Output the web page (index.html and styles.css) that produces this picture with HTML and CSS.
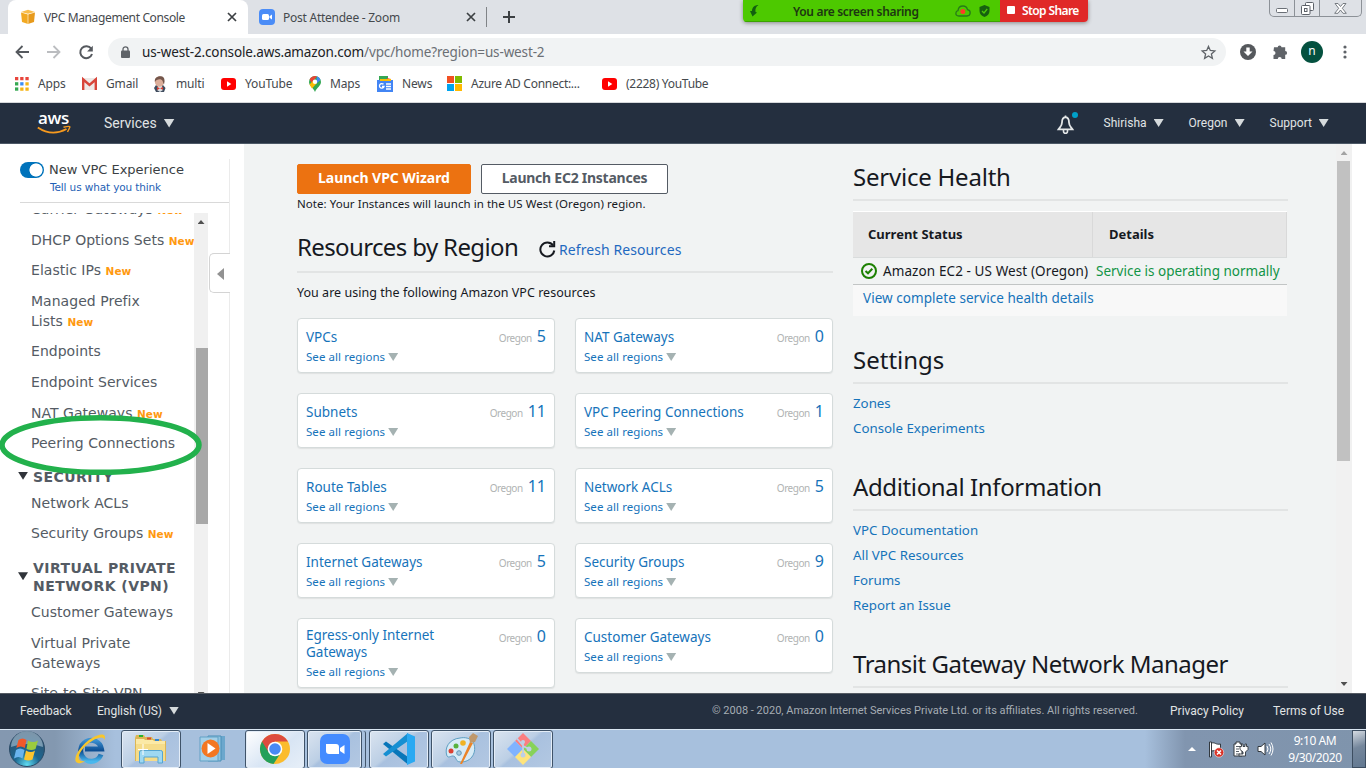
FILE: index.html
```html
<!DOCTYPE html>
<html lang="en">
<head>
<meta charset="utf-8">
<title>VPC Management Console</title>
<link rel="stylesheet" href="styles.css">
</head>
<body>
<header class="tabs">
  <div class="tab active">
    <svg width="16" height="16" viewBox="0 0 16 16"><path d="M1 3.500 8 5.500V15L2 13z" fill="#f2a922"/><path d="M15 3.500 8 5.500V15l6-2z" fill="#e79a1c"/><path d="M1 3 8 .8 15 3 8 4.800z" fill="#f9bd4a"/><path d="M8 5v10" stroke="#fff3d5" stroke-width=".7"/></svg>
    <span class="tab-title t1">VPC Management Console</span>
    <svg class="x" width="10" height="10" viewBox="0 0 10 10"><path d="M1 1l8 8M9 1 1 9" stroke="#3c4043" stroke-width="1.700"/></svg>
  </div>
  <div class="tab idle">
    <svg width="16" height="16" viewBox="0 0 16 16"><rect width="16" height="16" rx="4" fill="#4a8cf7"/><rect x="3" y="5" width="7" height="6" rx="1.500" fill="#fff"/><path d="M10.500 7.300 13 5.500v5l-2.500-1.800z" fill="#fff"/></svg>
    <span class="tab-title t2">Post Attendee - Zoom</span>
    <svg class="x" width="10" height="10" viewBox="0 0 10 10"><path d="M1 1l8 8M9 1 1 9" stroke="#3c4043" stroke-width="1.700"/></svg>
  </div>
  <svg class="plus" width="12" height="12" viewBox="0 0 12 12"><path d="M6 0v12M0 6h12" stroke="#3c4043" stroke-width="2"/></svg>
  <div class="share">
    <div class="share-green">
      <svg width="9" height="12" viewBox="0 0 9 12"><path d="M8.500 0C5 0 2 2 2 6L0 6l2.500 5.500L7 7.500 5.500 7C5 4 6 1.500 8.500 0z" fill="#12600f"/></svg>
      <span class="share-text">You are screen sharing</span>
      <svg class="cloud" width="16" height="12" viewBox="0 0 16 12"><path d="M4 11C1.500 11 .7 9.500.9 8 1 6.700 2 5.800 3 5.600 3.300 2.500 5.500 1 8 1c2.700 0 4 1.600 4.500 3.600 2 .4 2.800 1.700 2.700 3.400C15 10 14 11 12 11z" fill="none" stroke="#287b18" stroke-width="1.300"/><circle cx="7.800" cy="6.500" r="2.500" fill="#ff3b28"/></svg>
      <svg width="11" height="12" viewBox="0 0 11 12"><path d="M5.500 0 10.500 2v4c0 3-2 5-5 6-3-1-5-3-5-6V2z" fill="#17600f"/><path d="M3 6l2 2 3.200-4" fill="none" stroke="#4dc90a" stroke-width="1.300"/></svg>
    </div>
    <div class="share-red"><i></i><span>Stop Share</span></div>
  </div>
  <div class="winbtns">
    <span><svg width="12" height="6" viewBox="0 0 12 6"><rect x=".5" y=".5" width="11" height="4" rx="1" fill="#fff" stroke="#6a6f76"/></svg></span>
    <span><svg width="13" height="13" viewBox="0 0 13 13"><rect x="4.500" y=".5" width="8" height="8" rx="1" fill="#fff" stroke="#5c6168"/><rect x=".5" y="3.500" width="8.500" height="9" rx="1" fill="#fff" stroke="#5c6168"/><rect x="3.500" y="6.500" width="2.500" height="3" fill="#fff" stroke="#5c6168"/></svg></span>
    <span><svg width="13" height="11" viewBox="0 0 13 11"><path d="M1 .5h3l2.500 3L9 .5h3L8.300 5.300l4 5H9L6.500 7 4 10.300H.7l4-5z" fill="#fff" stroke="#6a6f76" stroke-width=".9"/></svg></span>
  </div>
</header>

<div class="toolbar">
  <svg width="14" height="14" viewBox="0 0 14 14"><path d="M14 7H1.500M7.500 1l-6 6 6 6" fill="none" stroke="#55595e" stroke-width="1.800"/></svg>
  <svg width="14" height="14" viewBox="0 0 14 14"><path d="M0 7h12.500M6.500 1l6 6-6 6" fill="none" stroke="#bbbdc0" stroke-width="1.800"/></svg>
  <svg width="15" height="15" viewBox="0 0 15 15"><path d="M12.200 3.700A6 6 0 1 0 13 9" fill="none" stroke="#55595e" stroke-width="2"/><path d="M13.800 .8v5.700H8.100z" fill="#55595e"/></svg>
  <div class="omnibox">
    <svg width="9" height="12" viewBox="0 0 9 12"><rect y="4.500" width="9" height="7.500" rx="1" fill="#5f6368"/><path d="M2 5V3.300a2.500 2.500 0 0 1 5 0V5" fill="none" stroke="#5f6368" stroke-width="1.300"/></svg>
    <span class="url">us-west-2.console.aws.amazon.com<em>/vpc/home?region=us-west-2</em></span>
    <svg class="star" width="15" height="15" viewBox="0 0 15 15"><path d="M7.500 1.400 9.300 5.500l4.500.4-3.400 3 1 4.400-3.900-2.400-3.900 2.400 1-4.400-3.400-3 4.500-.4z" fill="none" stroke="#5f6368" stroke-width="1.300"/></svg>
  </div>
  <svg class="dl" width="16" height="16" viewBox="0 0 16 16"><circle cx="8" cy="8" r="8" fill="#55585c"/><path d="M6.300 3.500h3.400v4H12.500L8 12 3.500 7.500h2.800z" fill="#fff"/></svg>
  <svg class="ext" width="16" height="16" viewBox="0 0 16 16"><path d="M2 3.300h3.700a1.900 1.900 0 1 1 3.800 0h3.700V7a1.900 1.900 0 1 1 0 3.800V15H9.700a2 2 0 0 0-4 0H1.500v-4a2 2 0 0 0 0-4z" fill="#5f6368"/></svg>
  <span class="avatar">n</span>
  <svg class="dots" width="4" height="14" viewBox="0 0 4 14"><g fill="#5f6368"><circle cx="2" cy="2" r="1.600"/><circle cx="2" cy="7" r="1.600"/><circle cx="2" cy="12" r="1.600"/></g></svg>
</div>

<nav class="bookmarks">
  <a class="b-apps"><svg width="14" height="14" viewBox="0 0 14 14"><g fill="#e8453c"><path d="M0 0h3.300v3.300H0zM5.200 0h3.300v3.300H5.200zM10.400 0h3.300v3.300h-3.300z"/></g><path d="M0 5.200h3.300v3.300H0z" fill="#36a852"/><path d="M5.200 5.200h3.300v3.300H5.200z" fill="#3b8df5"/><path d="M10.400 5.200h3.300v3.300h-3.300zM5.200 10.400h3.300v3.300H5.200zM10.400 10.400h3.300v3.300h-3.300z" fill="#f6b414"/><path d="M0 10.400h3.300v3.300H0z" fill="#36a852"/></svg><span>Apps</span></a>
  <a class="b-gmail"><svg width="15" height="12" viewBox="0 0 15 12"><rect width="15" height="12" rx="1" fill="#eee9e7"/><path d="M1.200 12V1.500L7.500 7l6.300-5.500V12" fill="none" stroke="#d8453a" stroke-width="2.400"/></svg><span>Gmail</span></a>
  <a class="b-multi"><svg width="14" height="16" viewBox="0 0 14 16"><path d="M3 9 1 12l2 4h8l1.500-4L10 9z" fill="#3f4c5e"/><path d="M5 10h4l1 4-3 2-3-2z" fill="#dbe0e4"/><ellipse cx="6.500" cy="5.500" rx="4.700" ry="5.200" fill="#dcae9a"/><path d="M2 6C.8 1 6 0 8 .3c4 .4 4 4.700 3 8.200C10 7 10 4 8 3.400 5 3 3 4 2 6z" fill="#74564b"/><path d="M4 11l3 1.200-3 2zM7 12.200 10 11v3z" fill="#d53c30"/></svg><span>multi</span></a>
  <a class="b-yt"><svg width="15" height="12" viewBox="0 0 15 12"><rect width="15" height="12" rx="3" fill="#f00"/><path d="M6 3.300v5.400L10.300 6z" fill="#fff"/></svg><span>YouTube</span></a>
  <a class="b-maps"><svg width="12" height="16" viewBox="0 0 12 16"><path d="M6 0a6 6 0 0 0-6 6c0 4 4 5 6 10 2-5 6-6 6-10a6 6 0 0 0-6-6z" fill="#34a853"/><path d="M.6 3.300A6 6 0 0 1 8 .3L2.500 7z" fill="#ea4335"/><path d="M8 .3A6 6 0 0 1 11.500 4L7 8z" fill="#4285f4"/><path d="M.5 8.500 5 4l3 3-5 5.500z" fill="#fbbc04"/><circle cx="6" cy="5.700" r="2.200" fill="#fff"/></svg><span>Maps</span></a>
  <a class="b-news"><svg width="16" height="16" viewBox="0 0 16 16"><path d="M2 0h9v7H2z" fill="#35a853"/><path d="M10 2l4 1v5h-4z" fill="#ea4335"/><path d="M0 4h16v12H0z" fill="#4285f4"/><path d="M3 3h11v2H3z" fill="#fbbc04"/><path d="M6.500 8.300A2.300 2.300 0 1 0 7 10.500H5M9 8h5M9 10.500h5M9 13h5" fill="none" stroke="#fff" stroke-width="1.300"/></svg><span>News</span></a>
  <a class="b-azure"><svg width="15" height="15" viewBox="0 0 15 15"><path d="M0 0h7v7H0z" fill="#f25022"/><path d="M8 0h7v7H8z" fill="#7fba00"/><path d="M0 8h7v7H0z" fill="#00a4ef"/><path d="M8 8h7v7H8z" fill="#ffb900"/></svg><span>Azure AD Connect:...</span></a>
  <a class="b-yt2"><svg width="15" height="12" viewBox="0 0 15 12"><rect width="15" height="12" rx="3" fill="#f00"/><path d="M6 3.300v5.400L10.300 6z" fill="#fff"/></svg><span>(2228) YouTube</span></a>
</nav>

<div class="awsnav">
  <div class="awslogo"><span>aws</span><svg width="34" height="9" viewBox="0 0 34 9"><path d="M.8 1.500Q15 11 29.500 3" fill="none" stroke="#f79a1e" stroke-width="1.900"/><path d="M26.500 1.200Q33.500-.5 32.800 1.200T30.500 6" fill="none" stroke="#f79a1e" stroke-width="1.400"/></svg></div>
  <span class="services">Services</span><i class="tri"></i>
  <svg class="bell" width="20" height="22" viewBox="0 0 20 22"><path d="M8.500 5.200C6 5.500 5 7.500 5 10.500 5 14 3 15 1.500 17.300h14C14 15 12 14 12 10.500c0-3-1-5-3.500-5.300z" fill="none" stroke="#e4e7e8" stroke-width="1.800"/><path d="M6.500 18v1.300a2 2 0 0 0 4 0V18M8.500 5V3.500" fill="none" stroke="#e4e7e8" stroke-width="1.600"/><circle cx="18" cy="3" r="3" fill="#00a1c9"/></svg>
  <span class="navitem n1">Shirisha</span><i class="tri small"></i>
  <span class="navitem n2">Oregon</span><i class="tri small"></i>
  <span class="navitem n3">Support</span><i class="tri small"></i>
</div>

<div class="main">
  <aside class="side">
    <div class="side-panel">
      <div class="experience">
        <i class="toggle"></i>
        <div><b>New VPC Experience</b><a>Tell us what you think</a></div>
      </div>
      <div class="side-body">
        <ul class="menu">
          <li>Carrier Gateways <em>New</em></li>
          <li>DHCP Options Sets <em>New</em></li>
          <li>Elastic IPs <em>New</em></li>
          <li>Managed Prefix<br>Lists <em>New</em></li>
          <li>Endpoints</li>
          <li>Endpoint Services</li>
          <li>NAT Gateways <em>New</em></li>
          <li>Peering Connections</li>
          <li class="group g1"><i class="mini"></i>SECURITY</li>
          <li>Network ACLs</li>
          <li>Security Groups <em>New</em></li>
          <li class="group g2"><i class="mini"></i>VIRTUAL PRIVATE<br>NETWORK (VPN)</li>
          <li>Customer Gateways</li>
          <li>Virtual Private<br>Gateways</li>
          <li>Site-to-Site VPN</li>
        </ul>
        <div class="side-scroll"><i class="arrow up"></i><i class="thumb"></i><i class="arrow down"></i></div>
      </div>
    </div>
    <div class="collapse"><i></i></div>
    <svg class="ring" width="206" height="64" viewBox="0 0 206 64"><ellipse cx="102.500" cy="32" rx="98.500" ry="27.300" fill="none" stroke="#22b14c" stroke-width="5.500"/></svg>
  </aside>

  <section class="content">
    <div class="left">
      <div class="buttons"><button class="primary">Launch VPC Wizard</button><button class="plain">Launch EC2 Instances</button></div>
      <p class="note">Note: Your Instances will launch in the US West (Oregon) region.</p>
      <div class="title"><h2>Resources by Region</h2>
        <svg width="17" height="17" viewBox="0 0 17 17"><path d="M14 4.300A7 7 0 1 0 15.300 9.500" fill="none" stroke="#16191f" stroke-width="2"/><path d="M15.200 0v5.200H10" fill="none" stroke="#16191f" stroke-width="2"/></svg>
        <a>Refresh Resources</a></div>
      <p class="using">You are using the following Amazon VPC resources</p>
      <div class="cards">
        <div class="card"><div class="row"><a class="name">VPCs</a><small>Oregon</small><b>5</b></div><div class="see">See all regions<i></i></div></div>
        <div class="card"><div class="row"><a class="name">NAT Gateways</a><small>Oregon</small><b>0</b></div><div class="see">See all regions<i></i></div></div>
        <div class="card"><div class="row"><a class="name">Subnets</a><small>Oregon</small><b>11</b></div><div class="see">See all regions<i></i></div></div>
        <div class="card"><div class="row"><a class="name">VPC Peering Connections</a><small>Oregon</small><b>1</b></div><div class="see">See all regions<i></i></div></div>
        <div class="card"><div class="row"><a class="name">Route Tables</a><small>Oregon</small><b>11</b></div><div class="see">See all regions<i></i></div></div>
        <div class="card"><div class="row"><a class="name">Network ACLs</a><small>Oregon</small><b>5</b></div><div class="see">See all regions<i></i></div></div>
        <div class="card"><div class="row"><a class="name">Internet Gateways</a><small>Oregon</small><b>5</b></div><div class="see">See all regions<i></i></div></div>
        <div class="card"><div class="row"><a class="name">Security Groups</a><small>Oregon</small><b>9</b></div><div class="see">See all regions<i></i></div></div>
        <div class="card tall"><div class="row"><a class="name">Egress-only Internet<br>Gateways</a><small>Oregon</small><b>0</b></div><div class="see">See all regions<i></i></div></div>
        <div class="card"><div class="row"><a class="name">Customer Gateways</a><small>Oregon</small><b>0</b></div><div class="see">See all regions<i></i></div></div>
      </div>
    </div>
    <div class="right">
      <h2 class="h-health">Service Health</h2>
      <div class="health">
        <div class="thead"><span>Current Status</span><span>Details</span></div>
        <div class="trow">
          <svg width="16" height="16" viewBox="0 0 16 16"><circle cx="8" cy="8" r="7" fill="none" stroke="#1d8102" stroke-width="2"/><path d="M4.500 8 7 10.300 11.300 5.800" fill="none" stroke="#1d8102" stroke-width="2"/></svg>
          <span class="svc">Amazon EC2 - US West (Oregon)</span><span class="ok">Service is operating normally</span></div>
        <a class="view">View complete service health details</a>
      </div>
      <h2 class="h-set">Settings</h2>
      <div class="links"><a>Zones</a><a>Console Experiments</a></div>
      <h2 class="h-add">Additional Information</h2>
      <div class="links"><a>VPC Documentation</a><a>All VPC Resources</a><a>Forums</a><a>Report an Issue</a></div>
      <h2 class="h-tgw">Transit Gateway Network Manager</h2>
    </div>
    <div class="scroll"><i class="arrow up"></i><i class="thumb"></i><i class="arrow down"></i></div>
  </section>
</div>

<footer class="foot">
  <span class="f1">Feedback</span><span class="f2">English (US)</span><i class="tri small"></i>
  <span class="copy">© 2008 - 2020, Amazon Internet Services Private Ltd. or its affiliates. All rights reserved.</span>
  <span class="f3">Privacy Policy</span><span class="f4">Terms of Use</span>
</footer>

<div class="taskbar">
  <svg class="orb" width="38" height="38" viewBox="0 0 38 38"><defs><radialGradient id="orb" cx=".5" cy=".95" r=".9"><stop offset="0" stop-color="#5fdcf2"/><stop offset=".4" stop-color="#1c6791"/><stop offset="1" stop-color="#31506c"/></radialGradient></defs><circle cx="19" cy="19" r="17.500" fill="url(#orb)" stroke="#2a4a66"/><path d="M3 17A16 16 0 0 1 35 17Q19 11 3 17z" fill="#c5dcea" opacity=".5"/><path d="M10.500 10q4-3 8 0l-1.700 8q-4-3-8.500 0z" fill="#f1592a"/><path d="M20 10.500q5 3 10 0l-2.500 8.500q-4 2-9 0z" fill="#9ccb3e"/><path d="M8 20q4-3 8.500 0L14.500 28.500q-4-3-8.500 0z" fill="#6ab4ee"/><path d="M18 20.500q5 3 9 0L24.500 29.500q-4 2-8.500 0z" fill="#fdc52e"/></svg>
  <svg class="ie" width="34" height="32" viewBox="0 0 34 32"><defs><linearGradient id="ie" x2="0" y2="1"><stop stop-color="#3b91d2"/><stop offset=".5" stop-color="#0c4c91"/><stop offset="1" stop-color="#48b8ee"/></linearGradient></defs><path d="M28 21.500A10.500 10.500 0 1 1 28.500 16H12" fill="none" stroke="url(#ie)" stroke-width="5"/><path d="M5 30C-2 28 6 13 19 5 27 .3 34 0 31.500 7 31 3 25 4 19 8 9 14 2 25 8 28q2 1 5-1-5 4-8 3z" fill="#f8c62c"/></svg>
  <div class="tb explorer"><svg width="34" height="32" viewBox="0 0 34 32"><path d="M1 28V5l1-3h8l1 2h7l1 2h8l1 2h4v20z" fill="#ddb654"/><path d="M2 28V6h8l1 1h8l1 1h11v20z" fill="#fbe9a6"/><path d="M5 2h4v2H5z" fill="#28b22d"/><path d="M13 4.500h4v2h-4z" fill="#d64930"/><path d="M21 6h4v2h-4z" fill="#3386d4"/><path d="M2 11h29v17H2z" fill="#f5dc8a"/><path d="M5.500 30V19q0-1.500 2-1.500h19q2 0 2 1.500v11h-4.500v-6H10v6z" fill="#9ed8f2" stroke="#55a5d2"/><path d="M9 11v11M4 16.500h10" stroke="#fff"/></svg></div>
  <svg class="wmp" width="30" height="28" viewBox="0 0 30 28"><path d="M14 1h12v24H14z" fill="#6ba7cd"/><path d="M9 1h13v25H9z" fill="#8fc4e1" stroke="#4b8fb7"/><path d="M1 2h18v24H1z" fill="#a4d0e8" stroke="#62a1c5"/><circle cx="11.500" cy="13.500" r="9" fill="#f37721"/><path d="M8.500 8v11l8-5.500z" fill="#fff"/></svg>
  <div class="tb chrome"><svg width="32" height="32" viewBox="0 0 32 32"><circle cx="16" cy="16" r="15" fill="#fbbc2d"/><path d="M16 16 3 8.500A15 15 0 0 1 29 8.500H16z" fill="#dd4b3e"/><path d="M3 8.500A15 15 0 0 0 14.500 31L22 19.500 16 16z" fill="#24a05a"/><path d="M3 8.500 9.500 19 16 9z" fill="#dd4b3e"/><circle cx="16" cy="16" r="7.300" fill="#fff"/><circle cx="16" cy="16" r="5.800" fill="#4989f4"/></svg></div>
  <div class="tb zoom"><svg width="30" height="30" viewBox="0 0 30 30"><rect width="30" height="30" rx="7" fill="#438bff"/><path d="M6 10h10q3 0 3 3v7H9q-3 0-3-3zM20 14l4.500-3v9L20 17z" fill="#fff"/></svg></div>
  <div class="tb code"><svg width="32" height="32" viewBox="0 0 32 32"><path d="M0 11l3-2.500L25 24v7.500z" fill="#0876b9"/><path d="M0 21l3 2.500L25 8V0z" fill="#168fd2"/><path d="M24 0l8 3.500v25L24 32z" fill="#29a9f2"/></svg></div>
  <div class="tb paint"><svg width="34" height="32" viewBox="0 0 34 32"><path d="M16 5C5 6 0 15 3 23c2 3 5-2 8 1 2 3 1 5 7 5 12-1 15-13 11-20-3-4-8-5-13-4z" fill="#d7ebf6" stroke="#5d9ec2"/><circle cx="7" cy="18" r="2.500" fill="#dc4032"/><circle cx="12" cy="13" r="2.500" fill="#57b23e"/><circle cx="19" cy="10" r="2.800" fill="#f1b323"/><circle cx="15" cy="20" r="2.300" fill="#a6c9de" stroke="#6197b8"/><path d="M26 9l3 1-11 21h-2z" fill="#eb8428"/><path d="M26 10 25 4l4-4 5 3-3 6z" fill="#bf986c"/></svg></div>
  <div class="tb git"><svg width="32" height="32" viewBox="0 0 32 32"><path d="M16 0l8 8-8 8-8-8z" fill="#fb7e80"/><path d="M8 8l8 8-8 8-8-8z" fill="#80b3ff"/><path d="M24 8l8 8-8 8-8-8z" fill="#87d259"/><path d="M16 16l8 8-8 8-8-8z" fill="#ffe47c"/><path d="M9.500 5l7 8M16 9v14M16 13l6 3" fill="none" stroke="#becfe5" stroke-width="1.800"/><circle cx="16" cy="9" r="2" fill="#becfe5"/><circle cx="22" cy="16" r="2.500" fill="#becfe5"/><circle cx="16" cy="22" r="2.500" fill="#becfe5"/></svg></div>
  <div class="tray">
    <i class="uparrow"></i>
    <svg class="flag" width="17" height="17" viewBox="0 0 17 17"><path d="M1.500 1h2v15h-2zM3.500 2c4-1 4 2 9 1v7c-4 1-5-1-9 0z" fill="#fff" stroke="#32383e"/><circle cx="11" cy="11.500" r="4.700" fill="#d93025" stroke="#fff" stroke-width=".5"/><path d="M9 9.500l4 4M13 9.500l-4 4" stroke="#fff" stroke-width="1.500"/></svg>
    <svg class="plug" width="15" height="17" viewBox="0 0 15 17"><path d="M1 3h2V1h4v2h2v12H1z" fill="#fff" stroke="#32383e"/><path d="M3 5.500h4M3 8h3M3 10.500h3M3 13h4" stroke="#5a6169"/><path d="M7 5.500h1.500V3h1.500v2.500h2V3h1.500v2.500H15v3L12.500 11v4H6v-2h4v-2L7 8.500z" fill="#fff" stroke="#32383e" stroke-width=".9"/></svg>
    <svg class="vol" width="16" height="14" viewBox="0 0 16 14"><path d="M1 4.500h3L8 1v12L4 9.500H1z" fill="#fff" stroke="#32383e"/><path d="M10 4q2 3 0 6M12 2q3.500 5 0 10M14 .5q4 6.500 0 13" fill="none" stroke="#fff"/></svg>
    <div class="clock"><span>9:10 AM</span><span>9/30/2020</span></div>
    <i class="desk"></i>
  </div>
</div>
</body>
</html>
```
FILE: styles.css
```css
* { box-sizing: border-box; }
body { margin: 0; width: 1366px; height: 768px; overflow: hidden; display: flex; flex-direction: column; background: #fff; font-family: "Noto Sans", sans-serif; font-size: 13px; color: #16191f; }
svg { display: block; flex: none; overflow: visible; }
i, em { font-style: normal; }
h2, p, ul { margin: 0; padding: 0; }
span, a { white-space: nowrap; }

/* browser tabs */
.tabs { height: 34px; flex: none; background: #dee1e6; display: flex; font-size: 12px; color: #45494d; position: relative; }
.tab { display: flex; align-items: center; height: 34px; }
.tab.active { width: 240px; margin-left: 8px; background: #fff; border-radius: 8px 8px 0 0; padding: 0 11px 0 12px; }
.tab.idle { width: 239px; padding: 0 10px 0 11px; border-right: 1px solid #808387; height: 20px; margin-top: 7px; }
.tab-title { margin-left: 8px; }
.t1 { letter-spacing: -.37px; }
.t2 { letter-spacing: -.25px; }
.x { margin-left: auto; }
.plus { margin: 11px 0 0 16px; }
.share { position: absolute; left: 743px; top: 0; height: 22px; display: flex; font-size: 12px; font-weight: 600; box-shadow: 0 1px 4px #888; border-radius: 0 0 4px 4px; overflow: hidden; }
.share-green { width: 257px; background: #4dc900; display: flex; align-items: center; padding: 1px 10px 0 7px; color: #1d3712; border-bottom: 1px solid #3ba300; }
.share-text { margin-left: 34px; letter-spacing: -.34px; }
.cloud { margin: 0 8px 0 auto; }
.share-red { width: 88px; background: #e02828; color: #fff; display: flex; align-items: center; padding: 0 0 2px 7px; gap: 7px; letter-spacing: -.6px; }
.share-red i { width: 8px; height: 8px; background: #fff; border-radius: 1px; }
.winbtns { position: absolute; left: 1269px; top: 0; display: flex; height: 17px; border: 1px solid #8c9197; border-top: 0; border-radius: 0 0 5px 5px; }
.winbtns span { width: 25px; border-right: 1px solid #8c9197; display: flex; align-items: center; justify-content: center; }
.winbtns span:first-child { padding-top: 5px; }
.winbtns span:last-child { width: 41px; border: 0; }

/* address row */
.toolbar { height: 35px; flex: none; display: flex; align-items: center; padding: 1px 19px 0 15px; }
.toolbar > svg:nth-child(2) { margin-left: 18px; }
.toolbar > svg:nth-child(3) { margin-left: 18px; }
.omnibox { width: 1118px; height: 28px; margin-left: 14px; border-radius: 14px; background: #f1f3f4; display: flex; align-items: center; padding: 0 10px 0 13px; }
.url { margin-left: 12px; font-size: 13.500px; letter-spacing: -.14px; color: #202124; }
.url em { color: #6b6f74; }
.star { margin-left: auto; }
.dl { margin-left: 14px; }
.ext { margin-left: 16px; }
.avatar { width: 22px; height: 22px; border-radius: 50%; background: #04513f; color: #fff; text-align: center; line-height: 20px; font-size: 12px; margin-left: 13px; }
.dots { margin-left: auto; }
.bookmarks { height: 34px; flex: none; border-bottom: 1px solid #d6d8db; display: flex; align-items: center; padding: 0 0 4px 15px; font-size: 12px; letter-spacing: -.15px; color: #45494d; }
.bookmarks a { display: flex; align-items: center; gap: 9px; flex: none; }
.b-apps { width: 67px; } .b-gmail { width: 71px; } .b-multi { width: 68px; } .b-yt { width: 88px; } .b-maps { width: 68px; } .b-news { width: 70px; } .b-azure { width: 155px; letter-spacing: -.28px; }
.b-yt2 { letter-spacing: -.28px; }

/* console header */
.awsnav { height: 41px; flex: none; background: #242f3f; border-bottom: 1px solid #4c5866; color: #e0e4e5; display: flex; align-items: center; font-family: Roboto, sans-serif; padding-left: 36px; }
.awslogo { width: 68px; height: 24px; }
.awslogo span { display: block; height: 16px; color: #fff; font: 600 17px/14px "Open Sans", sans-serif; letter-spacing: -.3px; padding-left: 2px; }
.awslogo svg { margin: -1px 0 0 1px; }
.services { font-size: 14px; letter-spacing: -.02px; }
.tri { width: 11px; height: 9px; background: #d6dbdd; clip-path: polygon(0 0, 100% 0, 50% 100%); margin-left: 7px; }
.tri.small { width: 10px; height: 8px; margin-left: 6px; }
.bell { margin: 0 27px 0 882px; }
.navitem { font-size: 12px; }
.n1 { width: 44px; } .n2 { width: 40px; margin-left: 25px; } .n3 { width: 43px; margin-left: 25px; }

/* sidebar */
.main { height: 549px; flex: none; display: flex; }
.side { width: 244px; position: relative; display: flex; font-family: "DejaVu Sans", sans-serif; }
.side-panel { width: 208px; margin-top: 15px; }
.experience { margin-left: 20px; width: 209px; height: 44px; display: flex; border-bottom: 1px solid #d9d9d9; padding-top: 3px; }
.toggle { width: 24px; height: 16px; border-radius: 8px; background: radial-gradient(circle at 16px 8px, #fff 6.2px, #0073bb 6.900px); flex: none; }
.experience b { display: block; margin-left: 5px; font-size: 13px; line-height: 15px; font-weight: 400; color: #3b3f44; white-space: nowrap; }
.experience a { display: block; margin: 3px 0 0 6px; font-size: 10.500px; line-height: 14px; letter-spacing: -.13px; color: #1f5fb5; }
.side-body { height: 480px; margin-top: 10px; display: flex; overflow: hidden; }
.menu { width: 194px; list-style: none; margin-top: -14px; font-size: 14px; line-height: 20px; color: #545b64; flex: none; }
.menu li { padding-left: 31px; margin-bottom: 10.600px; white-space: nowrap; letter-spacing: .03px; }
.menu em { font-size: 10.500px; line-height: 0; font-weight: 700; color: #ff9910; margin-left: 0; }
.menu .group { position: relative; padding-left: 33px; font-weight: 700; font-size: 14px; line-height: 18px; letter-spacing: .45px; }
.menu .g1 { margin: 14.500px 0 7px; }
.menu .g2 { margin: 16px 0 7px; }
.mini { position: absolute; left: 18px; top: calc(50% - 5px); width: 10px; height: 8px; background: #30343a; clip-path: polygon(0 0, 100% 0, 50% 100%); }
.side-scroll { width: 14px; background: #f0f0f0; display: flex; flex-direction: column; }
.arrow { width: 7px; height: 4px; background: #505050; margin: 7px auto 0; flex: none; }
.arrow.up { clip-path: polygon(0 100%, 100% 100%, 50% 0); }
.arrow.down { clip-path: polygon(0 0, 100% 0, 50% 100%); }
.side-scroll .thumb { flex: none; width: 12px; height: 176px; background: #a8a8a8; margin: 124px 0 0 2px; }
.side-scroll .arrow.down { margin-top: 168px; }
.collapse { width: 22px; border-right: 1px solid #ebebeb; margin-top: 15px; padding-top: 94px; }
.collapse i { display: block; width: 21px; height: 40px; margin-left: 1px; border: 1px solid #d4d4d4; border-right: 0; border-radius: 5px 0 0 5px; background: #fff; }
.collapse i::after { content: ""; display: block; width: 7px; height: 12px; margin: 14px 0 0 7px; background: #929292; clip-path: polygon(100% 0, 100% 100%, 0 50%); }
.ring { position: absolute; left: -2px; top: 269px; }

/* content */
.content { width: 1108px; background: #f1f3f3; display: flex; padding-left: 53px; color: #16191f; }
.left { width: 536px; }
.buttons { display: flex; gap: 10px; margin-top: 20px; }
button { height: 30px; border-radius: 2px; font: 700 14px/26px "Noto Sans", sans-serif; padding: 0 0 2px; letter-spacing: -.05px; }
.primary { width: 174px; background: #ec7211; border: 1px solid #ec7211; color: #fff; }
.plain { width: 187px; background: #fff; border: 1px solid #545b64; color: #545b64; letter-spacing: -.25px; }
.note { font-size: 11.500px; line-height: 16px; margin-top: 2px; height: 16px; letter-spacing: .05px; }
h2 { font-weight: 400; font-size: 24px; line-height: 32px; white-space: nowrap; }
.title { display: flex; height: 61px; border-bottom: 2px solid #e2e4e4; padding-top: 19px; }
.title h2 { width: 242px; letter-spacing: -.63px; }
.title svg { margin-top: 10px; }
.title a { font-size: 14px; line-height: 20px; margin: 9px 0 0 3px; letter-spacing: .08px; color: #1f69c0; }
.using { font-size: 12.500px; line-height: 18px; margin-top: 11px; letter-spacing: .03px; }
.cards { display: grid; grid-template-columns: 258px 258px; gap: 20px; margin-top: 16px; align-items: start; }
.card { background: #fff; border: 1px solid #d5dbdb; border-radius: 4px; height: 55px; padding: 7px 8px 0; color: #1673ba; box-shadow: 0 1px 1px #dfe2e2; }
.row { display: flex; align-items: baseline; line-height: 20px; }
.name { font-size: 13.500px; margin-right: auto; }
.row small { font-size: 10px; color: #b0b3b3; letter-spacing: -.45px; }
.row b { font-weight: 400; font-size: 16px; margin-left: 5px; line-height: 20px; }
.see { font-size: 11.500px; line-height: 18px; display: flex; align-items: center; gap: 3px; letter-spacing: .06px; }
.see i { width: 10px; height: 8px; background: #a5b2b2; clip-path: polygon(0 0, 100% 0, 50% 100%); }
.tall { height: 70px; }
.tall .name { line-height: 17px; position: relative; top: -2px; }
.right { width: 435px; margin-left: 20px; }
.right h2 { border-bottom: 2px solid #e2e4e4; height: 40px; }
.right .h-health { margin-top: 17px; letter-spacing: -.22px; }
.health { width: 434px; margin-top: 10px; font-size: 13.500px; }
.thead { display: flex; height: 47px; border-top: 1px solid #fff; border-bottom: 1px solid #d9dcdc; background: #e6e6e6; font-weight: 700; line-height: 44px; font-size: 13px; }
.thead span { border-right: 1px solid #d9d9d9; padding-left: 15px; }
.thead span:first-child { width: 240px; }
.thead span:last-child { width: 194px; padding-left: 16px; }
.trow { height: 27px; display: flex; align-items: center; border-bottom: 1px solid #c2c5c5; padding: 0 0 1px 8px; }
.svc { margin-left: 6px; width: 213px; letter-spacing: .1px; }
.ok { color: #119446; }
.view { display: block; height: 31px; line-height: 26px; padding-left: 10px; background: #f8f8f8; color: #1673ba; letter-spacing: .05px; }
.h-set { margin-top: 28px; }
.links { padding-top: 7px; color: #1673ba; font-size: 13.300px; }
.links a { display: block; line-height: 25px; }
.h-add { margin-top: 30px; letter-spacing: -.37px; }
.h-tgw { margin-top: 30px; letter-spacing: -.5px; }
.scroll { width: 16px; margin-left: auto; background: #f1f1f1; display: flex; flex-direction: column; }
.scroll .arrow.up { background: #a3a3a3; }
.scroll .thumb { width: 13px; height: 300px; margin: 6px 0 0 1px; background: #c1c1c1; }
.scroll .arrow.down { margin-top: 221px; }

/* footer */
.foot { height: 36px; flex: none; background: #242f3f; border-top: 1px solid #555b63; color: #e1e4e5; font: 12px Roboto, sans-serif; display: flex; align-items: center; padding: 0 0 2px 20px; }
.f1 { width: 77px; } .f2 { width: 66px; }
.copy { margin-left: 533px; width: 458px; font-size: 11px; color: #a6adb4; }
.f3 { width: 103px; }

/* taskbar */
.taskbar { height: 39px; flex: none; display: flex; align-items: center; border-top: 1px solid #dae6f2; background: linear-gradient(90deg, #8498b0 0, #8398b0 55px, #a7c0dd 115px, #a7c0dd 1145px, #8195af 1185px, #7f94ac 100%); }
.orb { margin-left: 8px; }
.ie { margin-left: 27px; width: 34px; }
.tb { height: 39px; width: 60px; border: 1px solid #3f5369; border-radius: 3px; box-shadow: inset 0 0 0 1px #e4edf7; background: linear-gradient(140deg, #dae4f0 0, #bccfe5 45%, #a9c1df 50%, #b3c8e2 100%); display: flex; align-items: center; justify-content: center; flex: none; }
.explorer { margin-left: 14px; }
.wmp { margin-left: 18px; }
.chrome { margin-left: 16px; background: linear-gradient(140deg, #fff, #d8e5f4 55%, #e7eff8); width: 60px; }
.zoom { margin-left: 2px; width: 55px; box-shadow: inset 0 0 0 1px #e4edf7, 4px 0 0 -1px #a7c0dd, 5px 0 0 -1px #42566c; }
.code { margin-left: 7px; }
.paint, .git { margin-left: 2px; }
.tray { display: flex; align-items: center; margin-left: auto; height: 38px; color: #fff; }
.uparrow { width: 8px; height: 4px; background: #fff; clip-path: polygon(0 100%, 100% 100%, 50% 0); }
.flag { margin-left: 12px; } .plug { margin-left: 8px; } .vol { margin-left: 9px; }
.clock { width: 68px; margin: 0 3px 0 8px; font-size: 12px; line-height: 17px; text-align: center; letter-spacing: -.4px; }
.clock span { display: block; }
.desk { width: 14px; height: 38px; border: 1px solid #3d4e61; background: linear-gradient(160deg, #d5dbe2, #75879c 45%, #627891); }
```
